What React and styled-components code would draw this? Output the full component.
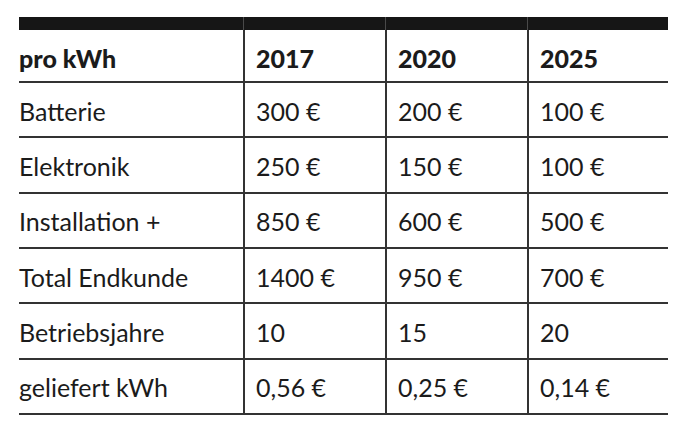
import React from "react";
import styled, { createGlobalStyle } from "styled-components";

const Global = createGlobalStyle`
  html, body { margin: 0; padding: 0; background: #fff; }
  body { font-family: Lato, "Open Sans", "Liberation Sans", sans-serif; color: #1b1b1b; }
`;

const Wrap = styled.div`
  padding: 17px 0 0 19px;
`;

const Grid = styled.div`
  display: grid;
  grid-template-columns: 224px 142px 142px 141px;
  width: 649px;
`;

const BarCell = styled.div`
  height: 13px;
  background: #161616;
  border-left: ${(p) => (p.$first ? "none" : "1px solid #4a4a4a")};
`;

const Cell = styled.div`
  box-sizing: border-box;
  height: ${(p) => (p.$head ? "53px" : "55.33px")};
  display: flex;
  align-items: center;
  padding: ${(p) => (p.$head ? "4px" : "2px")} 0 0 ${(p) => (p.$first ? "0" : "11px")};
  border-left: ${(p) => (p.$first ? "none" : "2px solid #333")};
  border-bottom: 2px solid #333;
  font-size: 25px;
  font-weight: ${(p) => (p.$head ? 900 : 400)};
  letter-spacing: 0;
  white-space: nowrap;
`;

const head = ["pro kWh", "2017", "2020", "2025"];
const rows = [
  ["Batterie", "300 €", "200 €", "100 €"],
  ["Elektronik", "250 €", "150 €", "100 €"],
  ["Installation +", "850 €", "600 €", "500 €"],
  ["Total Endkunde", "1400 €", "950 €", "700 €"],
  ["Betriebsjahre", "10", "15", "20"],
  ["geliefert kWh", "0,56 €", "0,25 €", "0,14 €"],
];

export default function App() {
  return (
    <Wrap>
      <Global />
      <Grid>
        {head.map((_, i) => (
          <BarCell key={"b" + i} $first={i === 0} />
        ))}
        {head.map((h, i) => (
          <Cell key={"h" + i} $head $first={i === 0}>
            {h}
          </Cell>
        ))}
        {rows.map((r, ri) =>
          r.map((c, ci) => (
            <Cell key={ri + "-" + ci} $first={ci === 0}>
              {c}
            </Cell>
          ))
        )}
      </Grid>
    </Wrap>
  );
}
